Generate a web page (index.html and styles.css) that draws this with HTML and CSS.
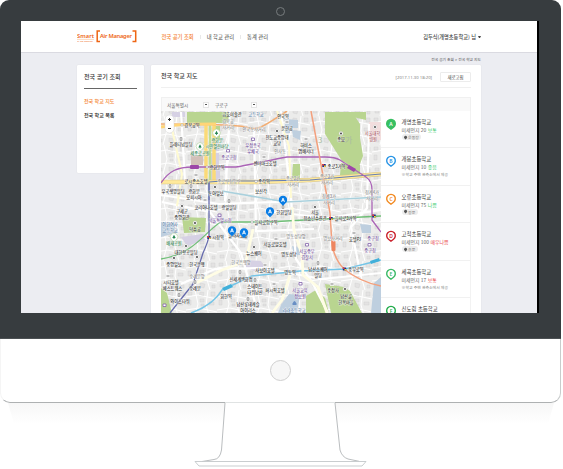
FILE: index.html
```html
<!DOCTYPE html>
<html lang="ko">
<head>
<meta charset="utf-8">
<title>Smart Air Manager</title>
<link rel="stylesheet" href="styles.css">
</head>
<body>
<div class="monitor">
  <div class="bezel">
    <div class="camera"></div>
    <div class="screen">
      <header class="header">
        <svg class="logo" viewBox="77 28 60 15">
          <text x="77" y="37.400" textLength="17">Smart</text><text x="77" y="40.800" class="byline" textLength="16">by the weather</text>
          <path d="M77 38.400H94" stroke="#f5a060" stroke-width=".4"/>
          <path d="M100 30H97.200V40.500H100M132.500 30H135.700V40.500H132.500" fill="none" stroke="#ee6514" stroke-width="1.500"/>
          <text x="100" y="37.400" textLength="32">Air Manager</text>
        </svg>
        <nav class="nav"><a class="on">전국 공기 조회</a><i></i><a>내 학교 관리</a><i></i><a>통계 관리</a></nav>
        <div class="user">김두식(개명초등학교) 님<b></b></div>
      </header>
      <div class="crumbs">전국 공기 조회 &gt; 전국 학교 지도</div>
      <div class="columns">
        <aside class="side">
          <h2>전국 공기 조회</h2>
          <a class="on">전국 학교 지도</a>
          <a>전국 학교 목록</a>
        </aside>
        <main class="main">
          <div class="title"><h1>전국 학교 지도</h1><time>[2017.11.30 18:20]</time><button>새로고침</button></div>
          <div class="filters"><span class="city">서울특별시</span><b></b><span class="gu">구로구</span><b></b></div>
          <div class="content">
            <svg class="map" viewBox="161 111 220 202">
              <defs>
                <pattern id="blocks" width="31" height="29" patternUnits="userSpaceOnUse">
                  <path d="M0 7L12 5 31 9M9 0L12 14 8 29M22 0L20 15 24 29M0 20L13 18 31 22" stroke="#fff" stroke-width="1" fill="none"/>
                  <path d="M2 2h4v3H2zM14 2l4 .5-.5 3-4-1zM25 2h4v4h-4zM2 10h3v5H2zM14 9h4v3h-4zM23 12h5v3h-5zM3 23h4v3H3zM14 22l5 1-1 4-4-1zM26 24h3v3h-3zM15 14h3v2h-3z" fill="#e3e2e2" stroke="#d0d0d0" stroke-width=".4"/>
                </pattern>
                <g id="pin"><path d="M0 5.200L-2.500 2.800A4.200 4.200 0 1 1 2.500 2.800Z" fill="#087ce5"/><path d="M-1.500 1.300L0-2.400 1.500 1.300M-1 .2H1" fill="none" stroke="#fff" stroke-width=".9"/></g>
                <g id="station"><rect x="-1.700" y="-1.500" width="3.400" height="3" fill="#182c8b"/><path d="M-1.700-1.500H0V0H-1.700Z" fill="#f13a32"/><path d="M0 0H1.700V1.500H0Z" fill="#ffd42d"/></g>
                <g id="place"><circle r="2" fill="#fff" stroke="#c4c4c4" stroke-width=".4"/><circle r=".9" fill="#333"/></g>
                <g id="hotel"><rect x="-2" y="-1.800" width="4" height="3.600" fill="#fff"/><path d="M-1-1.200V1.200M1-1.200V1.200M-1 0H1" stroke="#666" stroke-width=".5"/></g>
                <g id="build"><rect x="-1.800" y="-2" width="3.600" height="4" fill="#fff"/><path d="M-1 1.500V-1.500H1V1.500ZM0-1V1" fill="none" stroke="#666" stroke-width=".5"/></g>
                <g id="tree"><path d="M0 4.500L-2.800 2.500A3.800 3.800 0 1 1 2.800 2.500Z" fill="#fff" stroke="#a9cf96" stroke-width=".6"/><path d="M0-2.200L1.700 1H.4V2H-.4V1H-1.700Z" fill="#258451"/></g>
              </defs>
              <path fill="#ececeb" d="M161 111h220v202H161z"/><path fill="url(#blocks)" d="M161 111h220v202H161z"/>
              <g><path fill="#d6d1e4" d="M172 112h13v5h-13zM211 143h8v8h-8zM211 153h8v14h-8zM211 170h9v10h-9zM181 237l22-3 2 6-18 6zM212 216h10v7h-10zM246 260l15 1 4 7-11 3-8-4z"/><path fill="#d2c0b9" d="M191 155h12v10h-12z"/><path fill="#becfdf" d="M285 119l13 1v8h-8v5h-5zM292 130l9 1-1 9-7-3zM161 222l14 2v9l-14 4zM292 246l8 2v7h-6zM360 224l11 1v8h-9zM281 305l8-11 11 1-3 18h-19zM374 283l7-6v36h-10z"/><path fill="#f2dddd" d="M369 122h12v18h-12z"/></g>
              <g fill="#b9d590"><path d="M187 112h45l-3 11h-42zM182 217l24 1-1 14-21 1zM213 126h7v14h-7z"/><path d="M325 112h27l8 12v14l3 18-5 13-16-8-17-27zM342 112h24v8l-9-2zM293 164h7v14h-8zM341 163l19 2v11l-20-1zM306 296l10-6 9 8 4 15h-23zM325 284l19 3 6 4 12 22h-31zM161 288l6 5 5 20h-11z"/></g>
              <g fill="none" stroke="#fff" stroke-width="2.200"><path d="M162 202L210 212 241 253 256 306M181 112l4 70M230 111l-5 90M254 130l2 101 58-2M281 111l10 88 5 60 16 23 16 31M369 124l-2 84-16 19 10 50M265 211l62 7 54-8M161 195l58 9 84-3 78-4M181 284l34-15 47-1 60 11 59-6"/></g>
              <g fill="none" stroke-linejoin="round">
                <path d="M170 120L182 174 177 206M277 111l12 35 2 52" stroke="#fffbd2" stroke-width="2"/>
                <path d="M206 125V180M214 125V181" stroke="#fbda78" stroke-width="3.500"/><path d="M210 125V180" stroke="#bfdc92" stroke-width="2.600"/>
                <path d="M161 182H258L310 180 381 174" stroke="#d4c28b" stroke-width="4.400"/><path d="M161 182H258L310 180 381 174" stroke="#ffe99b" stroke-width="3.600"/>
                <path d="M209 200V182L222 181H258L310 180 381 174" stroke="#667eb5" stroke-width="1.100"/>
                <path d="M161 124C200 124 232 124 246 127 258 132 267 124 287 111" stroke="#f3ad72" stroke-width="1.500"/>
                <path d="M161 127C180 124 190 124 216 124" stroke="#ffd577" stroke-width="3"/>
                <path d="M161 183C169 171 177 167 193 167H236C250 165 270 160 287 157H325Q335 157 340 160L352 168 366 177Q372 181 372 190V220L381 232" stroke="#aa63b6" stroke-width="1.300"/>
                <path d="M161 259C195 254 205 231 221 222L267 222 381 216" stroke="#70bf77" stroke-width="1.300"/>
                <path d="M209 183V236Q208 242 203 253L193 284 170 313" stroke="#666bad" stroke-width="1.300"/>
                <path d="M311 111L330 213 332 245Q335 260 344 269 360 282 381 286" stroke="#f3a07d" stroke-width="1.500"/>
                <path d="M191 313Q213 305 222 290L252 276 300 271 345 269 381 260" stroke="#75c5e7" stroke-width="1.500"/>
                <path d="M222 191L286 202 381 197" stroke="#a9d0dc" stroke-width="1.600"/>
                <path d="M292 207L294 230 302 255 303 275 318 287 327 313M196 283l26-13 24-9 7-32M290 275l-8 25-10 13" stroke="#fffde5" stroke-width="2.800"/>
              </g>
              <g font-size="8" fill="#a9bca2"><text x="318" y="143">3</text><text x="345" y="143">가</text></g>
              <rect x="190" y="165" width="9" height="4" rx="1" fill="#9d45a8"/><path d="M349 165l7 4-2 3-7-4z" fill="#9d45a8"/><rect x="331.500" y="241" width="4" height="10" rx="1" fill="#ee855f"/><path d="M222 288l9-4 2 3-9 4zM370 261l9-3 1 3-9 3z" fill="#42b0da"/>
              <use href="#tree" x="216.500" y="133"/><use href="#tree" x="200" y="146.500"/><use href="#tree" x="174" y="237"/>
              <use href="#place" x="277" y="131"/><use href="#place" x="341" y="133.500"/><use href="#place" x="215" y="187"/><use href="#place" x="182" y="206"/><use href="#place" x="195" y="223"/><use href="#place" x="186" y="246"/><use href="#place" x="174" y="258"/><use href="#place" x="197" y="257"/><use href="#place" x="315" y="207"/><use href="#place" x="375" y="127"/><use href="#place" x="345" y="289"/><use href="#place" x="254" y="247"/>
              <use href="#hotel" x="264" y="157"/><use href="#hotel" x="306" y="139"/><use href="#hotel" x="196" y="175"/><use href="#hotel" x="205" y="200"/><use href="#hotel" x="276" y="239"/><use href="#hotel" x="354" y="233"/><use href="#hotel" x="274" y="284"/><use href="#hotel" x="168" y="276"/><use href="#hotel" x="287" y="122"/><use href="#hotel" x="332" y="284"/><use href="#hotel" x="265" y="265"/>
              <use href="#build" x="181" y="139"/><use href="#build" x="170" y="186"/><use href="#build" x="191" y="186"/><use href="#build" x="229" y="201"/><use href="#build" x="283" y="207"/><use href="#build" x="179" y="295"/><use href="#build" x="318" y="263"/><use href="#build" x="195" y="282"/><use href="#build" x="240" y="272"/><use href="#build" x="255" y="280"/><use href="#build" x="248" y="299"/>
              <g fill="#fff" stroke="#8463ac" stroke-width=".8"><path d="M226.500 149.500h3v2.500h-3zM251.500 138h3v2.500h-3zM218 214h3v2.500h-3zM305.500 243.500h3v2.500h-3zM299 282.500h3v2.500h-3zM368 243.500h3v2.500h-3zM163 304h3v2.500h-3z"/></g>
              <use href="#station" x="209" y="237.500"/><use href="#station" x="324" y="165.500"/><use href="#station" x="331" y="218.500"/><use href="#station" x="374" y="216"/><use href="#station" x="344.500" y="269"/>
              <g fill="#fff" stroke="#999" stroke-width=".5"><circle cx="207" cy="167" r="1.200"/><circle cx="256" cy="181.500" r="1.200"/><circle cx="182" cy="125" r="1.200"/><circle cx="252" cy="222" r="1.200"/></g>
              <g class="labels">
                <text x="192" y="127">경복궁역</text><text x="232" y="116">금호미술관</text><text x="256" y="116" class="blue">고등학교</text><text x="228" y="122.500" class="gray">경복궁</text><text x="228" y="128.500" class="gray">사거리</text><text x="254" y="130.500" class="gray">안국동사거리</text><text x="283" y="118">안국역</text><text x="287" y="130">운현궁</text><text x="277" y="138.500">천도교중앙대</text><text x="277" y="144.500">교당</text><text x="306" y="147">하비스</text><text x="306" y="153">앰배서더</text><text x="341" y="141">종묘</text><text x="372.500" y="135" class="red">서울대학</text><text x="373" y="141" class="red">병원</text>
                <text x="217" y="141.500" class="green">광화문</text><text x="217" y="147.500" class="green">시민열린마당</text><text x="181" y="146">플래티넘빌딩</text><text x="200" y="154.500" class="green">세종로공원</text><text x="253" y="146.500" class="purple">우정총국</text><text x="253" y="152.500" class="purple">우체국</text><text x="229" y="159" class="purple">종로구청</text><text x="217" y="168.500">광화문역</text><text x="265" y="165">센터마크호텔</text><text x="280" y="153" class="gray">인사동</text><text x="196" y="183">로시존스호텔</text><text x="229" y="183" class="gray">종로구청입구</text><text x="264" y="183">종각역</text><text x="261" y="193">보신각</text><text x="173" y="193">우국생명빌딩</text><text x="194" y="193">광화문</text><text x="194" y="199">오피시아</text><text x="216" y="195">동아일보</text><text x="206" y="208.500">코리아나호텔</text><text x="229" y="209">광일빌딩</text><text x="293" y="180" class="gray">종로2가</text><text x="293" y="186" class="gray">사거리</text><text x="336.500" y="167.500">종로3가역</text><text x="327" y="178" class="gray">종로3가</text><text x="327" y="184" class="gray">사거리</text><text x="329" y="198" class="gray">청계3가</text><text x="329" y="204" class="gray">사거리</text><text x="372" y="194" class="gray">청계4가</text><text x="372" y="200" class="gray">사거리</text>
                <text x="182" y="213">구세군</text><text x="182" y="219">중앙회관</text><text x="220" y="221.500" class="purple">서울특별시청</text><text x="195" y="231">덕수궁</text><text x="170" y="226" class="blue">이화여자</text><text x="170" y="232" class="blue">고등학교</text><text x="174" y="244.500" class="green">배재공원</text><text x="218" y="239">시청역</text><text x="186" y="254">대한항공빌딩</text><text x="174" y="266">중앙일보</text><text x="197" y="266">한국은행</text><text x="238" y="236.500">플라자호텔</text><text x="266" y="224">을지로입구역</text><text x="284" y="214">한화빌딩</text><text x="254" y="255">뉴스퀘어</text><text x="241" y="263.500" class="gray">한국은행앞</text><text x="265" y="271.500">사보이호텔</text><text x="315" y="214">서울</text><text x="315" y="220">청소년수련관</text><text x="345.500" y="220">을지로3가역</text><text x="275" y="246">서울로얄호텔</text><text x="296" y="238" class="gray">명동성당앞</text><text x="289" y="256">명동성당</text><text x="307" y="252.500" class="purple">서울중부</text><text x="307" y="258.500" class="purple">경찰서</text><text x="333" y="240" class="gray">명보사거리</text><text x="355" y="241">호텔PJ</text><text x="373" y="240" class="purple">중구청</text><text x="370" y="252" class="purple">중구청</text><text x="290" y="274">명동역</text><text x="318" y="271">남산스퀘어</text><text x="318" y="277">빌딩</text><text x="356" y="271">충무로역</text><text x="197" y="278" class="gray">숭례문앞</text><text x="195" y="290">숭례문</text><text x="241" y="280.500">신세계백화점</text><text x="255" y="287.500">스테이트</text><text x="255" y="293.500">타워남산</text><text x="226" y="297.500">회현역</text><text x="275" y="292">퍼시픽호텔</text><text x="300" y="291.500" class="purple">서울교육</text><text x="300" y="297.500" class="purple">정보원</text><text x="333" y="292">충정사</text><text x="346" y="297.500">남산골</text><text x="346" y="303.500">한옥마을</text><text x="180" y="303">와이즈타워</text><text x="248" y="306">남산롯데캐슬</text><text x="248" y="312">아이리스</text><text x="294" y="312" class="blue">리라초등학교</text><text x="171" y="284">시티호텔</text><text x="172.500" y="290">베스트웨스</text>
              </g>
              <use href="#pin" x="283" y="200.500"/><use href="#pin" x="270" y="212"/><use href="#pin" x="232" y="231"/><use href="#pin" x="244" y="233"/>
              <rect x="165" y="115" width="9" height="18" rx="4.500" fill="#fff" stroke="#d5d5d5" stroke-width=".5"/><path d="M168 119.500h3M169.500 118v3M168 128.500h3" stroke="#333" stroke-width="1"/>
              <path d="M292.500 305v-1.500q2-5 4 0v1.500z" fill="#698fc4"/>
            </svg>
            <ul class="list">
              <li><svg viewBox="0 0 12 14"><path d="M6 12L3 9.700A5 5 0 1 1 9 9.700Z" fill="#38bf62"/><text x="6" y="7.700" fill="#fff">A</text></svg><div><h3>개명초등학교</h3><p>미세먼지 20 <em class="good">보통</em></p><span class="tag">운동장</span></div></li>
              <li><svg viewBox="0 0 12 14"><path d="M6 11.200L3.500 9.200A4.300 4.300 0 1 1 8.500 9.200Z" fill="#fff" stroke="#2794e5" stroke-width="1.400"/><text x="6" y="7.700" fill="#2794e5">B</text></svg><div><h3>개봉초등학교</h3><p>미세먼지 10 <em class="good">좋음</em></p><small>※학교 주변 관측소에서 제공</small></div></li>
              <li><svg viewBox="0 0 12 14"><path d="M6 11.200L3.500 9.200A4.300 4.300 0 1 1 8.500 9.200Z" fill="#fff" stroke="#f28a21" stroke-width="1.400"/><text x="6" y="7.700" fill="#f28a21">C</text></svg><div><h3>오류초등학교</h3><p>미세먼지 75 <em class="good">나쁨</em></p><span class="tag">정문</span></div></li>
              <li><svg viewBox="0 0 12 14"><path d="M6 11.200L3.500 9.200A4.300 4.300 0 1 1 8.500 9.200Z" fill="#fff" stroke="#ca202b" stroke-width="1.400"/><text x="6" y="7.700" fill="#ca202b">D</text></svg><div><h3>고척초등학교</h3><p>미세먼지 100 <em class="bad">매우나쁨</em></p><span class="tag">후문</span></div></li>
              <li><svg viewBox="0 0 12 14"><path d="M6 11.200L3.500 9.200A4.300 4.300 0 1 1 8.500 9.200Z" fill="#fff" stroke="#38b965" stroke-width="1.400"/><text x="6" y="7.700" fill="#38b965">E</text></svg><div><h3>세곡초등학교</h3><p>미세먼지 17 <em class="bad">보통</em></p><small>※학교 주변 관측소에서 제공</small></div></li>
              <li><svg viewBox="0 0 12 14"><path d="M6 11.200L3.500 9.200A4.300 4.300 0 1 1 8.500 9.200Z" fill="#fff" stroke="#22ac4b" stroke-width="1.400"/><text x="6" y="7.700" fill="#22ac4b">F</text></svg><div><h3>신도림 초등학교</h3></div></li>
            </ul>
          </div>
        </main>
      </div>
    </div>
  </div>
  <div class="chin"><div class="power"></div></div>
  <svg class="stand" viewBox="0 402 563 67">
    <defs><linearGradient id="shade" x2="0" y2="1"><stop stop-color="#f7f7f7"/><stop offset="1" stop-color="#fff"/></linearGradient></defs>
    <path d="M8 403H554L548 424H14Z" fill="url(#shade)"/>
    <path d="M225 403L221.500 450Q220 459 214 459.500L195 461.500 199 466H362L366 461.500 348 459Q342 457 340 450L335 403Z" fill="#fff"/>
    <path d="M225 403L221.500 450Q220 459 214 459.500L202 461.500M335 403L340 450Q342 457 348 459L359 461.300" fill="none" stroke="#a8acae" stroke-width=".8"/>
    <path d="M195 461.500H366L362 466H199Z" fill="#fff" stroke="#c3c7c9" stroke-width=".9"/><path d="M225 402.500H335" stroke="#e0e3e3"/>
  </svg>
</div>
</body>
</html>
```
FILE: styles.css
```css
* { box-sizing: border-box; }
body { margin: 0; background: #fff; font-family: "Noto Sans CJK KR", sans-serif; color: #444; overflow: hidden; }
h1, h2, h3, p, ul { margin: 0; padding: 0; list-style: none; }
.monitor { width: 563px; height: 469px; }
.bezel { width: 561px; height: 339px; padding: 7px 0 0 21px; background: #373c3f; border-radius: 9px 9px 0 0; border-bottom: 1px solid #4c5154; }
.camera { width: 9px; height: 9px; margin: 0 0 5px 255px; border: 1px solid #777c7e; border-radius: 50%; }
.screen { width: 518px; height: 292px; overflow: hidden; background: #ecedf2; border-right: 2px solid #000; }
.header { display: flex; align-items: center; height: 32px; padding: 0 56px; background: #fff; border-bottom: 1.5px solid #dadae1; }
.logo { width: 60px; height: 15px; margin: 0 24.5px 1px 0; flex: none; font: 600 5.7px "Noto Sans", sans-serif; fill: #ee6514; }
.logo .byline { font-size: 2.2px; font-weight: 400; }
.nav { display: flex; align-items: center; font-size: 5.3px; line-height: 8px; white-space: nowrap; }
.nav i { width: 1px; height: 4px; margin: 0 6px; background: #e8e8e8; }
.nav .on { color: #f48435; font-weight: 500; }
.user { display: flex; align-items: center; gap: 2px; margin-left: auto; font-size: 5.2px; font-weight: 500; white-space: nowrap; }
.user b { width: 3px; border: 1.5px solid transparent; border-top: 2px solid #444; border-bottom: 0; }
.crumbs { height: 12px; padding: 3px 56px 0; text-align: right; font-size: 3.75px; line-height: 7px; color: #555; }
.columns { display: flex; gap: 7px; padding: 0 56px; align-items: flex-start; }
.side { width: 67px; height: 108px; padding: 7px 7px 0; background: #fff; border-radius: 1px; box-shadow: 0 0 1px #ccc; }
.side h2 { height: 17px; margin-bottom: 7px; font-size: 6px; font-weight: 500; line-height: 9px; border-bottom: 1px solid #666; color: #333; }
.side a { display: block; height: 14px; font-size: 5px; line-height: 9px; font-weight: 500; color: #222; }
.side .on { color: #f48435; }
.main { width: 330px; height: 260px; padding: 0 10px; background: #fff; border-radius: 1px; box-shadow: 0 0 1px #ccc; }
.title { display: flex; align-items: center; height: 23px; margin-bottom: 9px; border-bottom: 1px solid #f0f0f0; }
.title h1 { flex: 1; font-size: 6px; line-height: 22px; font-weight: 500; color: #333; }
.title time { margin-right: 8px; padding-top: 2px; font: 4.25px "Open Sans", sans-serif; color: #777; }
.title button { width: 31px; height: 10px; margin-top: 2px; padding: 0; border: 1px solid #ececec; border-radius: 1px; background: #fff; font: 4.4px/8px "Noto Sans CJK KR", sans-serif; color: #444; }
.filters { display: flex; align-items: center; height: 14px; padding-left: 5px; border: 1px solid #f0f0f0; border-bottom: 0; background: #f9f9f9; font-size: 4.6px; line-height: 8px; color: #666; }
.filters .city { width: 36px; }
.filters .gu { width: 36px; margin-left: 6px; }
.filters b { display: grid; place-items: center; width: 6px; height: 6px; border: 1px solid #e5e5e5; background: #fff; }
.filters b::after { content: ""; width: 2px; height: 1px; background: #555; }
.content { display: flex; }
.map { display: block; width: 220px; height: 202px; }
.labels { font-size: 4.2px; font-weight: 500; text-anchor: middle; fill: #333; stroke: #fff; stroke-width: .7px; stroke-opacity: .7; paint-order: stroke; }
.gray { fill: #8c8c8c; }
.blue { fill: #5779a3; }
.green { fill: #328652; }
.purple { fill: #74519b; }
.red { fill: #a75361; }
.list { width: 90px; border-right: 1px solid #f2f2f2; }
.list li { display: flex; gap: 4.5px; height: 37.4px; padding: 7px 0 0 4px; border-bottom: 1px solid #f1f1f1; }
.list svg { width: 12px; height: 14px; flex: none; }
.list svg text { font: 600 5px "Noto Sans", sans-serif; text-anchor: middle; }
.list h3 { font-size: 5.4px; line-height: 8px; font-weight: 400; color: #333; white-space: nowrap; }
.list p { font-size: 4.9px; line-height: 7px; color: #666; white-space: nowrap; }
.list em { font-style: normal; }
.good { color: #42cb6f; }
.bad { color: #e94748; }
.list small { display: block; margin-top: 1px; font-size: 3.9px; line-height: 6px; color: #888; white-space: nowrap; }
.tag { display: flex; align-items: center; gap: 1.5px; width: max-content; height: 6px; margin-top: 1px; padding: 0 2.5px; border-radius: 3px; background: #ededed; font-size: 3.9px; line-height: 6px; color: #777; }
.tag::before { content: ""; width: 2.6px; height: 2.6px; border-radius: 50% 50% 50% 0; background: #555; transform: rotate(-45deg); }
.chin { display: flex; justify-content: center; align-items: flex-start; width: 561px; height: 64px; padding-top: 21px; border: 1px solid #c9cccc; border-top: 0; border-left-color: #f5f5f5; border-bottom-color: #aeb1b2; border-radius: 0 0 10px 10px; background: #fff; }
.power { width: 21px; height: 21px; border: 1px solid #cfcfcf; border-radius: 50%; background: #f7f7f7; }
.stand { display: block; width: 563px; height: 67px; margin-top: -1px; }
```
